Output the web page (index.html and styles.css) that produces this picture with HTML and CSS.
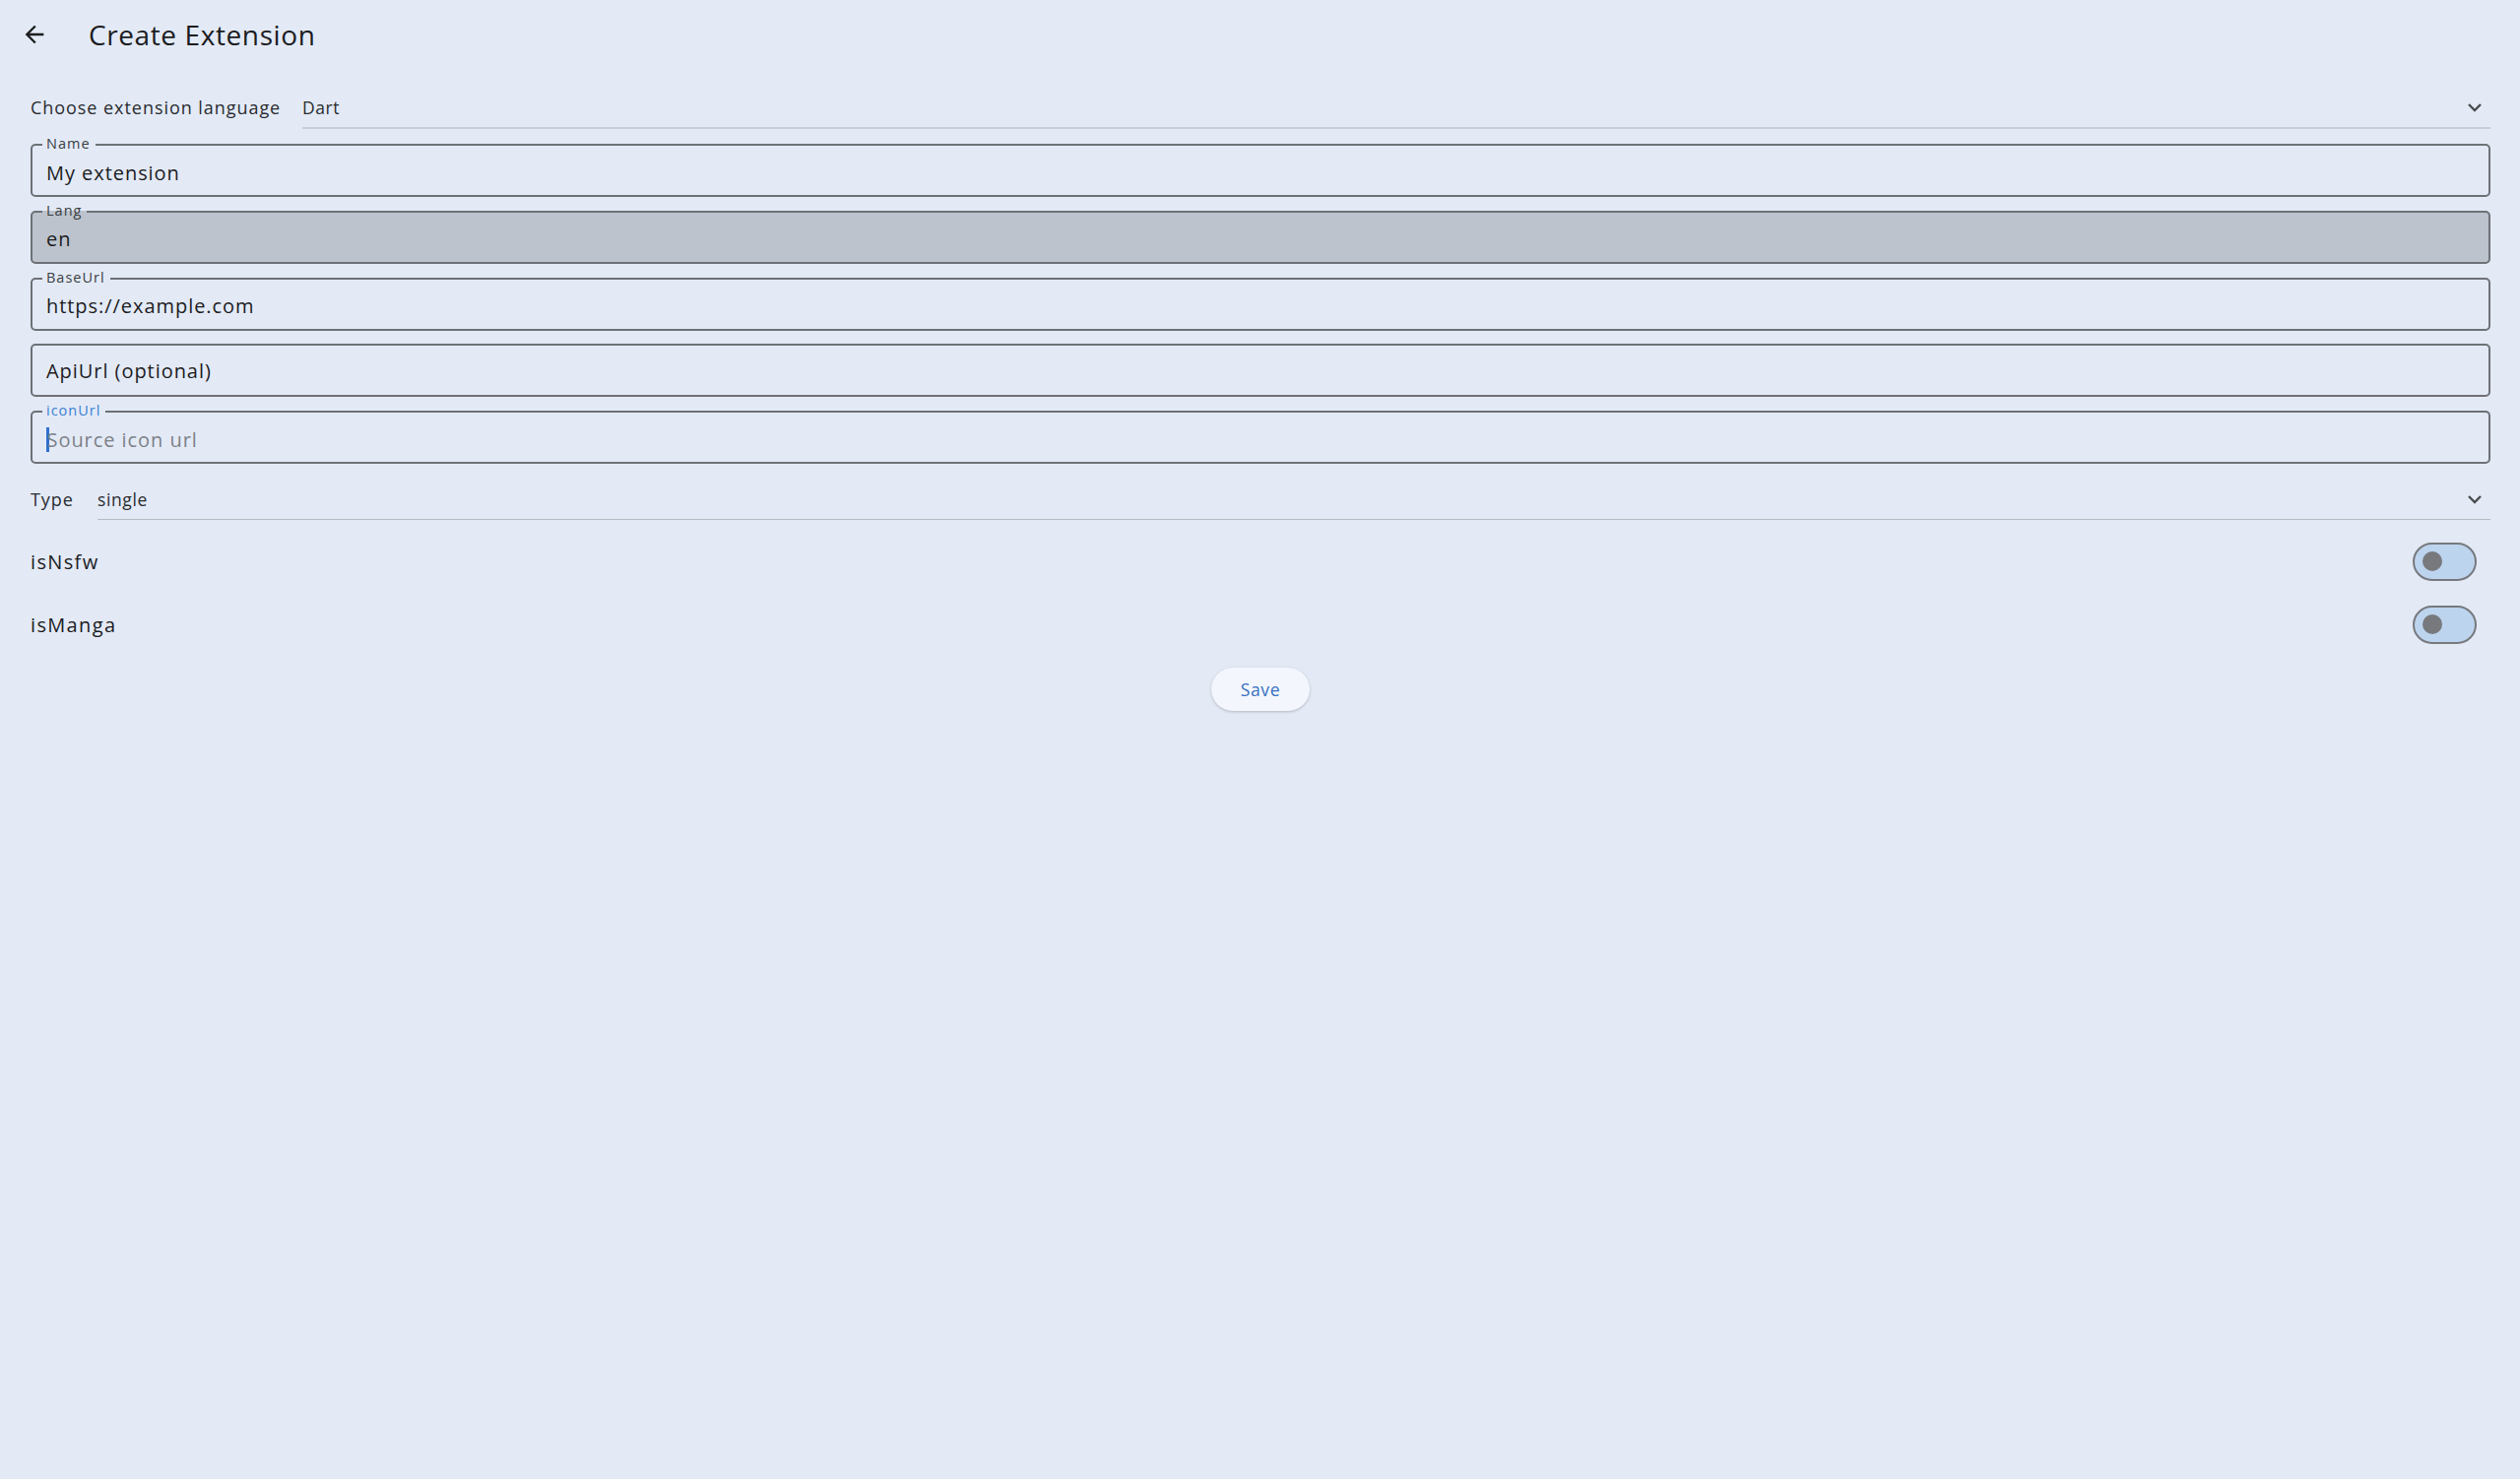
FILE: index.html
```html
<!DOCTYPE html>
<html>
<head>
<meta charset="utf-8">
<link rel="stylesheet" href="styles.css">
</head>
<body>
<div class="page">
  <header class="appbar">
    <button class="back" aria-label="Back">
      <svg width="28" height="28" viewBox="0 0 24 24"><path d="M20 11H7.83l5.59-5.59L12 4l-8 8 8 8 1.41-1.41L7.83 13H20v-2z" fill="#1d1d20"/></svg>
    </button>
    <h1 class="title">Create Extension</h1>
  </header>

  <main class="form">
    <div class="select-row lang-row">
      <span class="select-label">Choose extension language</span>
      <div class="select">
        <span class="select-value">Dart</span>
        <svg class="chev" width="16" height="10" viewBox="0 0 16 10"><path d="M2 2l6 6 6-6" fill="none" stroke="#4a4c50" stroke-width="2.4"/></svg>
      </div>
    </div>

    <div class="fields">
      <div class="field">
        <span class="flabel">Name</span>
        <span class="fvalue">My extension</span>
      </div>
      <div class="field disabled">
        <span class="flabel">Lang</span>
        <span class="fvalue">en</span>
      </div>
      <div class="field">
        <span class="flabel">BaseUrl</span>
        <span class="fvalue">https://example.com</span>
      </div>
      <div class="field">
        <span class="fvalue">ApiUrl (optional)</span>
      </div>
      <div class="field focused">
        <span class="flabel blue">iconUrl</span>
        <span class="fvalue placeholder"><span class="caret"></span>Source icon url</span>
      </div>
    </div>

    <div class="select-row type-row">
      <span class="select-label">Type</span>
      <div class="select">
        <span class="select-value">single</span>
        <svg class="chev" width="16" height="10" viewBox="0 0 16 10"><path d="M2 2l6 6 6-6" fill="none" stroke="#4a4c50" stroke-width="2.4"/></svg>
      </div>
    </div>

    <div class="switch-row">
      <span class="switch-label">isNsfw</span>
      <span class="switch"><span class="knob"></span></span>
    </div>
    <div class="switch-row">
      <span class="switch-label">isManga</span>
      <span class="switch"><span class="knob"></span></span>
    </div>

    <div class="actions">
      <button class="save">Save</button>
    </div>
  </main>
</div>
</body>
</html>
```

FILE: styles.css
```css
html, body {
  margin: 0;
  padding: 0;
  background: #e3eaf6;
  height: 100%;
}
body {
  font-family: "Open Sans", "Liberation Sans", sans-serif;
  color: #1c1c1f;
}
.page {
  min-height: 100%;
}
.appbar {
  height: 70px;
  display: flex;
  align-items: center;
  padding-left: 21px;
}
.back {
  width: 28px;
  height: 28px;
  padding: 0;
  border: none;
  background: none;
  display: flex;
  align-items: center;
  justify-content: center;
}
.title {
  margin: 0 0 0 41px;
  font-weight: 400;
  font-size: 28px;
  letter-spacing: 0.6px;
  color: #1c1c1f;
}
.form {
  padding: 0 30px 0 31px;
}
.select-row {
  display: flex;
  align-items: stretch;
}
.lang-row {
  margin-top: 18px;
  height: 43px;
}
.select-label {
  display: flex;
  align-items: center;
  font-size: 18px;
  letter-spacing: 0.95px;
  color: #2a2c30;
  padding-bottom: 2px;
}
.lang-row .select-label {
  width: 276px;
}
.type-row .select-label {
  width: 68px;
}
.select {
  flex: 1;
  display: flex;
  align-items: center;
  justify-content: space-between;
  border-bottom: 2px solid #c8ced7;
  padding-right: 8px;
}
.select-value {
  font-size: 17.5px;
  letter-spacing: 0.6px;
  color: #2a2c30;
}
.type-row {
  margin-top: 16px;
  height: 41px;
}
.type-row .select {
  border-bottom: 1.5px solid #b7bbc1;
}
.fields {
  margin-top: 15px;
  display: flex;
  flex-direction: column;
  gap: 13.75px;
}
.field {
  position: relative;
  height: 54px;
  box-sizing: border-box;
  border: 2px solid #6e7177;
  border-radius: 5px;
  display: flex;
  align-items: center;
  padding-left: 14px;
}
.field.disabled {
  background: #bcc3cc;
}
.flabel {
  position: absolute;
  top: -10px;
  left: 10px;
  padding: 0 5px 0 4px;
  font-size: 14.5px;
  line-height: 16px;
  letter-spacing: 1px;
  color: #3a3d42;
  background: #e3eaf6;
}
.field.disabled .flabel {
  background: linear-gradient(to bottom, #e3eaf6 50%, #bcc3cc 50%);
}
.flabel.blue {
  color: #3a7fd2;
}
.fvalue {
  font-size: 20px;
  letter-spacing: 0.95px;
  color: #1c1c1f;
  padding-top: 4px;
  display: flex;
  align-items: center;
}
.field:not(:has(.flabel)) .fvalue {
  padding-top: 0;
}
.fvalue.placeholder {
  color: #7d8188;
}
.caret {
  display: inline-block;
  width: 2.5px;
  height: 25px;
  background: #2f6fd0;
  margin-right: -2px;
}
.switch-row {
  height: 64px;
  display: flex;
  align-items: center;
  justify-content: space-between;
  padding-right: 14px;
}
.type-row + .switch-row {
  margin-top: 10px;
}
.switch-label {
  font-size: 20px;
  letter-spacing: 1.35px;
  color: #1c1c1f;
}
.switch {
  width: 65px;
  height: 39px;
  box-sizing: border-box;
  border: 2.5px solid #77797d;
  border-radius: 20px;
  background: #bdd4ee;
  display: flex;
  align-items: center;
  padding-left: 8px;
}
.knob {
  width: 20px;
  height: 20px;
  border-radius: 50%;
  background: #77797d;
}
.actions {
  display: flex;
  justify-content: center;
  margin-top: 12px;
}
.save {
  width: 100px;
  height: 44px;
  border: none;
  border-radius: 22px;
  background: #f3f7fd;
  box-shadow: 0 1px 3px rgba(0, 0, 0, 0.22);
  font-family: "Open Sans", "Liberation Sans", sans-serif;
  font-size: 17.5px;
  letter-spacing: 0.6px;
  color: #3a70c2;
  cursor: pointer;
}
```
